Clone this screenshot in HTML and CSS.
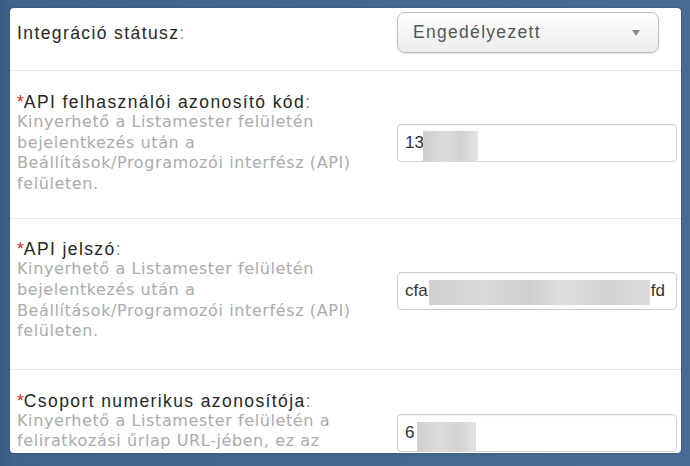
FILE: index.html
```html
<!DOCTYPE html>
<html lang="hu">
<head>
<meta charset="utf-8">
<title>Listamester integráció</title>
<link rel="stylesheet" href="styles.css">
</head>
<body>
<div class="modal">
  <div class="row row-first">
    <div class="label-col">
      <div class="label">Integráció státusz<span class="colon">:</span></div>
    </div>
    <div class="field">
      <div class="select">
        <span class="select-text">Engedélyezett</span>
        <span class="arrow"></span>
      </div>
    </div>
  </div>

  <div class="row row-second">
    <div class="label-col">
      <div class="label"><span class="req">*</span>API felhasználói azonosító kód<span class="colon">:</span></div>
      <div class="desc">Kinyerhető a Listamester felületén<br>bejelentkezés után a<br>Beállítások/Programozói interfész (API)<br>felületen.</div>
    </div>
    <div class="field">
      <div class="input"><span class="val">13</span><span class="redact redact-short"></span></div>
    </div>
  </div>

  <div class="row row-third">
    <div class="label-col">
      <div class="label"><span class="req">*</span>API jelszó<span class="colon">:</span></div>
      <div class="desc">Kinyerhető a Listamester felületén<br>bejelentkezés után a<br>Beállítások/Programozói interfész (API)<br>felületen.</div>
    </div>
    <div class="field">
      <div class="input input-pass"><span class="val">cfa</span><span class="redact redact-long"></span><span class="val">fd</span></div>
    </div>
  </div>

  <div class="row row-last">
    <div class="label-col">
      <div class="label"><span class="req">*</span>Csoport numerikus azonosítója<span class="colon">:</span></div>
      <div class="desc">Kinyerhető a Listamester felületén a<br>feliratkozási űrlap URL-jében, ez az</div>
    </div>
    <div class="field field-top">
      <div class="input"><span class="val">6</span><span class="redact redact-mid"></span></div>
    </div>
  </div>
</div>
</body>
</html>
```

FILE: styles.css
```css
html, body {
  margin: 0;
  padding: 0;
}

body {
  width: 690px;
  height: 466px;
  overflow: hidden;
  background: linear-gradient(90deg, #395a80 0px, #3f638c 12px, #466b95 100%);
  font-family: "Liberation Sans", Arial, sans-serif;
  padding-top: 8px;
  box-sizing: border-box;
}

.modal {
  margin-left: 10px;
  width: 671px;
  height: 445px;
  background: #fff;
  border-radius: 4px;
  overflow: hidden;
  box-shadow: 0 0 3px rgba(0, 0, 0, 0.25);
}

.row {
  display: flex;
  align-items: center;
  justify-content: space-between;
  padding: 21px 4px 24px 7px;
  border-bottom: 1px dotted #cfcfcf;
}

.row-first {
  padding-top: 4px;
  padding-bottom: 17px;
}

.row-second {
  padding-top: 21px;
  padding-bottom: 24px;
}

.row-third {
  padding-top: 20px;
  padding-bottom: 27px;
}

.row-last {
  align-items: flex-start;
  border-bottom: none;
}

.label-col {
  flex: 1;
}

.label {
  font-size: 17.5px;
  letter-spacing: 1.4px;
  line-height: 20px;
  color: #262626;
}

.colon {
  color: #8a8a8a;
}

.req {
  color: #d42a2a;
  letter-spacing: 0;
}

.desc {
  font-family: "DejaVu Sans", Verdana, sans-serif;
  font-size: 16px;
  letter-spacing: 0.6px;
  line-height: 20.6px;
  color: #ababab;
}

.field {
  width: 280px;
  flex: none;
}

.field-top {
  padding-top: 23px;
}

.select {
  width: 262px;
  height: 41px;
  box-sizing: border-box;
  border: 1px solid #bdbdbd;
  border-radius: 8px;
  background: linear-gradient(#ffffff, #f4f4f4 60%, #ececec);
  box-shadow: 0 1px 2px rgba(0, 0, 0, 0.12);
  display: flex;
  align-items: center;
  justify-content: space-between;
  padding: 0 18px 0 15px;
}

.select-text {
  font-size: 17.5px;
  letter-spacing: 1.3px;
  color: #555;
}

.arrow {
  width: 0;
  height: 0;
  border-left: 4px solid transparent;
  border-right: 4px solid transparent;
  border-top: 6px solid #8a8a8a;
  margin-top: 1px;
}

.input {
  height: 38px;
  box-sizing: border-box;
  border: 1px solid #cfcfcf;
  border-radius: 4px;
  background: #fff;
  box-shadow: inset 0 1px 2px rgba(0, 0, 0, 0.06);
  display: flex;
  align-items: center;
  padding-left: 7px;
  font-size: 17px;
  color: #333;
}

.input-pass {
  padding-right: 3px;
}

.redact {
  display: block;
  align-self: flex-end;
  background: linear-gradient(90deg, #cfcfcf, #dcdcdc 40%, #d2d2d2 70%, #e4e4e4);
}

.redact-short {
  width: 55px;
  height: 31px;
  margin-left: -1px;
  margin-bottom: -1px;
}

.redact-mid {
  width: 59px;
  height: 30px;
  margin-left: 3px;
  margin-bottom: -1px;
}

.redact-long {
  width: 221px;
  height: 25px;
  align-self: center;
  margin: 3px 1px 0 1px;
  background: linear-gradient(90deg, #d0d0d0, #dadada 25%, #cfcfcf 45%, #dedede 60%, #d2d2d2 80%, #dcdcdc);
}
```
